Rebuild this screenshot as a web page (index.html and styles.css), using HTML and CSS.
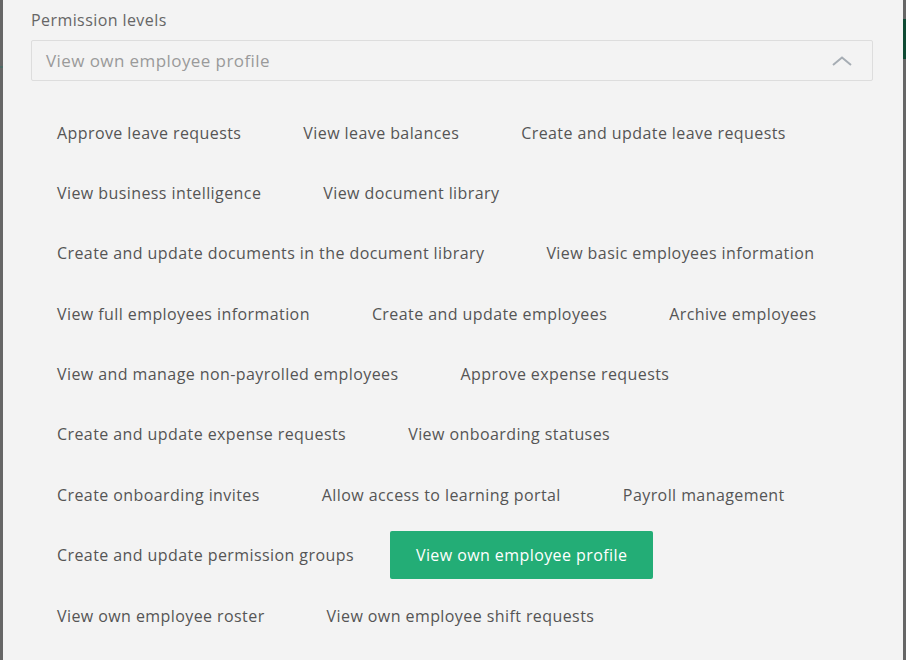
FILE: index.html
```html
<!DOCTYPE html>
<html lang="en">
<head>
<meta charset="utf-8">
<title>Permission levels</title>
<link rel="stylesheet" href="styles.css">
</head>
<body>
<div class="frame">
  <div class="edge edge-left"><div class="edge-line"></div></div>
  <main class="panel">
    <div class="label">Permission levels</div>
    <div class="select">
      <span class="select-value">View own employee profile</span>
      <svg class="chevron" width="20" height="10" viewBox="0 0 20 10"><path d="M1 9 L10 1.5 L19 9" fill="none" stroke="#a6adb4" stroke-width="2"/></svg>
    </div>
    <div class="options">
      <div class="row">
        <span class="chip">Approve leave requests</span>
        <span class="chip">View leave balances</span>
        <span class="chip">Create and update leave requests</span>
      </div>
      <div class="row">
        <span class="chip">View business intelligence</span>
        <span class="chip">View document library</span>
      </div>
      <div class="row">
        <span class="chip">Create and update documents in the document library</span>
        <span class="chip">View basic employees information</span>
      </div>
      <div class="row">
        <span class="chip">View full employees information</span>
        <span class="chip">Create and update employees</span>
        <span class="chip">Archive employees</span>
      </div>
      <div class="row">
        <span class="chip">View and manage non-payrolled employees</span>
        <span class="chip">Approve expense requests</span>
      </div>
      <div class="row">
        <span class="chip">Create and update expense requests</span>
        <span class="chip">View onboarding statuses</span>
      </div>
      <div class="row">
        <span class="chip">Create onboarding invites</span>
        <span class="chip">Allow access to learning portal</span>
        <span class="chip">Payroll management</span>
      </div>
      <div class="row">
        <span class="chip">Create and update permission groups</span>
        <span class="chip chip-selected">View own employee profile</span>
      </div>
      <div class="row">
        <span class="chip">View own employee roster</span>
        <span class="chip">View own employee shift requests</span>
      </div>
    </div>
  </main>
  <div class="edge edge-right"><div class="edge-block"></div></div>
</div>
</body>
</html>
```
FILE: styles.css
```css
html, body {
  margin: 0;
  padding: 0;
  background: #666666;
}
body {
  font-family: "Open Sans", Lato, sans-serif;
  font-size: 16px;
  letter-spacing: 0.42px;
  color: #555555;
}
.frame {
  display: flex;
  width: 906px;
  height: 660px;
  overflow: hidden;
}
.edge {
  flex: 0 0 3px;
  background: #666666;
}
.edge-left {
  padding-top: 66px;
}
.edge-line {
  height: 2px;
  background: #4d6b66;
}
.edge-right {
  padding-top: 19px;
}
.edge-block {
  height: 40px;
  background: #0f4a34;
}
.panel {
  flex: 0 0 900px;
  background: #f3f3f3;
  box-sizing: border-box;
  padding: 10px 30px 0 28px;
}
.label {
  line-height: 20px;
  height: 20px;
  color: #666666;
  margin-bottom: 10px;
}
.select {
  box-sizing: border-box;
  height: 41px;
  border: 1px solid #dddddd;
  border-radius: 2px;
  display: flex;
  align-items: center;
  justify-content: space-between;
  padding: 0 20px 0 14px;
  color: #9a9a9a;
  font-size: 17px;
}
.chevron {
  display: block;
  margin-top: 1px;
}
.options {
  display: flex;
  flex-direction: column;
  row-gap: 12.375px;
  padding-top: 27.5px;
}
.row {
  display: flex;
  column-gap: 10px;
}
.chip {
  height: 48px;
  box-sizing: border-box;
  padding: 0 26px;
  display: flex;
  align-items: center;
  white-space: nowrap;
  border-radius: 2px;
}
.chip-selected {
  background: #23ad76;
  color: #ffffff;
}
```
